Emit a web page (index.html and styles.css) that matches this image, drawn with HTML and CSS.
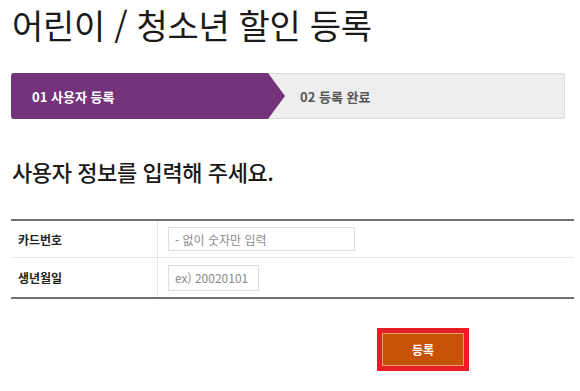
FILE: index.html
```html
<!DOCTYPE html>
<html lang="ko">
<head>
  <meta charset="UTF-8">
  <meta name="viewport" content="width=device-width, initial-scale=1.0">
  <title>어린이 / 청소년 할인 등록</title>
  <link rel="stylesheet" href="styles.css">
</head>
<body>
  <div class="page">
    <h1 class="title">어린이 / 청소년 할인 등록</h1>

    <div class="steps">
      <div class="step active">01 사용자 등록</div>
      <div class="step">02 등록 완료</div>
    </div>

    <h2 class="subtitle">사용자 정보를 입력해 주세요.</h2>

    <table class="form-table">
      <tr class="row-card">
        <th>카드번호</th>
        <td><input type="text" class="input card" placeholder="- 없이 숫자만 입력"></td>
      </tr>
      <tr class="row-birth">
        <th>생년월일</th>
        <td><input type="text" class="input birth" placeholder="ex) 20020101"></td>
      </tr>
    </table>

    <div class="actions">
      <span class="highlight">
        <button class="submit" onclick="register()">등록</button>
      </span>
    </div>
  </div>

  <script>
    function register() {
      const card = document.querySelector('.card').value;
      const birth = document.querySelector('.birth').value;
      if (card === '' || birth === '') return;
    }
  </script>
</body>
</html>
```

FILE: styles.css
```css
body {
  margin: 0;
  background: #fff;
  font-family: "Noto Sans CJK KR", "Noto Sans", sans-serif;
  color: #222;
}
.page {
  padding-left: 11px;
  width: 564px;
}
.title {
  margin: 0 0 24px 1px;
  font-size: 34px;
  line-height: normal;
  font-weight: 400;
  letter-spacing: -0.3px;
  color: #1a1a1a;
}
.steps {
  display: flex;
  width: 552px;
  height: 44px;
  background: #eee;
  border: 1px solid #dcdcdc;
  border-radius: 3px;
}
.step {
  display: flex;
  align-items: center;
  font-size: 13px;
  font-weight: 700;
  color: #555;
  padding-left: 32px;
}
.step.active {
  position: relative;
  width: 236px;
  height: 46px;
  margin: -1px 0 0 -1px;
  padding-left: 21px;
  background: #74327a;
  color: #fff;
  border-radius: 3px 0 0 3px;
}
.step.active::after {
  content: "";
  position: absolute;
  top: 0;
  left: 100%;
  border-top: 23px solid transparent;
  border-bottom: 23px solid transparent;
  border-left: 17px solid #74327a;
}
.subtitle {
  margin: 37px 0 33px 1px;
  font-size: 22px;
  line-height: 30px;
  font-weight: 500;
  color: #1a1a1a;
  letter-spacing: -0.4px;
}
.form-table {
  width: 563px;
  border-collapse: collapse;
  border-top: 2px solid #707070;
  border-bottom: 2px solid #707070;
}
.form-table th {
  width: 139px;
  padding: 0 0 0 7px;
  text-align: left;
  font-size: 12px;
  font-weight: 700;
  color: #222;
  border-right: 1px solid #e6e6e6;
}
.form-table td {
  padding: 0 0 0 10px;
}
.row-card th,
.row-card td {
  height: 36px;
  border-bottom: 1px solid #e6e6e6;
}
.row-birth th,
.row-birth td {
  height: 39px;
}
.input {
  display: block;
  box-sizing: border-box;
  border: 1px solid #dedede;
  padding: 0 6px;
  font-family: "Noto Sans CJK KR", "Noto Sans", sans-serif;
  font-size: 12px;
  color: #333;
  outline: none;
}
.input::placeholder {
  color: #8a8a8a;
}
.input.card {
  width: 187px;
  height: 24px;
}
.input.birth {
  width: 91px;
  height: 26px;
}
.actions {
  margin-top: 29px;
  padding-left: 366px;
}
.highlight {
  display: inline-block;
  border: 5px solid #e61e25;
}
.submit {
  display: block;
  width: 82px;
  height: 33px;
  border: 1px solid #e8a06c;
  background: #c75309;
  color: #fff;
  font-family: "Noto Sans CJK KR", "Noto Sans", sans-serif;
  font-size: 12px;
  font-weight: 700;
  cursor: pointer;
}
```
